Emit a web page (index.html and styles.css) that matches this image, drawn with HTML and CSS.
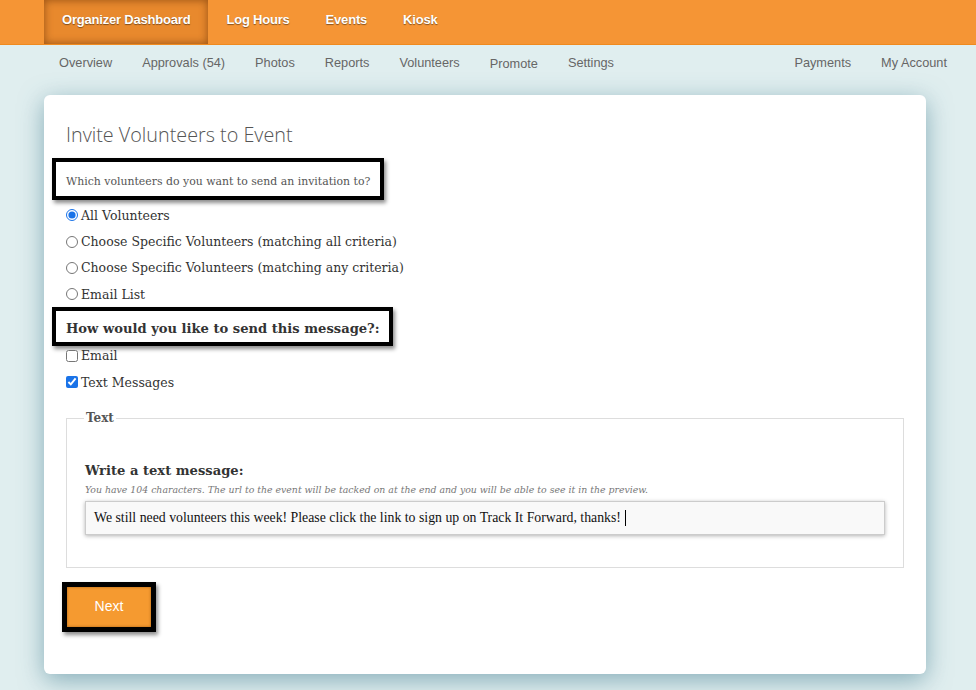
FILE: index.html
```html
<!DOCTYPE html>
<html>
<head>
<meta charset="utf-8">
<link rel="stylesheet" href="styles.css">
</head>
<body>
<header class="topbar">
  <a class="tab active">Organizer Dashboard</a>
  <a class="tab">Log Hours</a>
  <a class="tab">Events</a>
  <a class="tab">Kiosk</a>
</header>
<nav class="subnav">
  <div class="subnav-left">
    <a>Overview</a>
    <a>Approvals (54)</a>
    <a>Photos</a>
    <a>Reports</a>
    <a>Volunteers</a>
    <a class="low">Promote</a>
    <a>Settings</a>
  </div>
  <div class="subnav-right">
    <a>Payments</a>
    <a>My Account</a>
  </div>
</nav>
<main class="card">
  <h1 class="title">Invite Volunteers to Event</h1>
  <div class="callout q1">Which volunteers do you want to send an invitation to?</div>
  <div class="options first">
    <label class="opt"><input type="radio" name="who" checked> All Volunteers</label>
    <label class="opt"><input type="radio" name="who"> Choose Specific Volunteers (matching all criteria)</label>
    <label class="opt"><input type="radio" name="who"> Choose Specific Volunteers (matching any criteria)</label>
    <label class="opt"><input type="radio" name="who"> Email List</label>
  </div>
  <div class="callout q2">How would you like to send this message?:</div>
  <div class="options second">
    <label class="opt"><input type="checkbox"> Email</label>
    <label class="opt"><input type="checkbox" checked> Text Messages</label>
  </div>
  <fieldset class="textset">
    <legend>Text</legend>
    <div class="write">Write a text message:</div>
    <div class="hint">You have 104 characters. The url to the event will be tacked on at the end and you will be able to see it in the preview.</div>
    <div class="msg">We still need volunteers this week! Please click the link to sign up on Track It Forward, thanks!<span class="caret"></span></div>
  </fieldset>
  <div class="btnwrap"><button class="next">Next</button></div>
</main>
</body>
</html>
```
FILE: styles.css
```css
* { box-sizing: border-box; }
html, body { margin: 0; padding: 0; }
body {
  background: #e0eeef;
  font-family: "Liberation Sans", Arial, sans-serif;
  height: 690px;
  overflow: hidden;
}
.topbar {
  height: 45px;
  background: #f59535;
  border-bottom: 1px solid #f08a1e;
  display: flex;
  padding-left: 44px;
}
.tab {
  display: flex;
  align-items: center;
  padding: 0 18px 5px 18px;
  color: #fff;
  font-weight: bold;
  font-size: 13px;
  letter-spacing: -0.2px;
  text-shadow: 0 1px 1px rgba(0,0,0,0.45);
  height: 44px;
}
.tab.active {
  background: #e8892d;
  box-shadow: inset 0 0 8px rgba(90,40,0,0.6);
}
.subnav {
  display: flex;
  justify-content: space-between;
  padding: 0 14px 2px 44px;
  height: 37px;
  align-items: center;
}
.subnav a {
  color: #666;
  font-size: 12.75px;
  padding: 0 15px;
}
.subnav a.low { position: relative; top: 1px; }
.subnav-left, .subnav-right { display: flex; }
.card {
  margin: 13px 50px 0 44px;
  background: #fff;
  border-radius: 6px;
  height: 579px;
  padding: 28px 22px 0 22px;
  box-shadow: 0 6px 24px rgba(60,120,140,0.55);
}
.title {
  margin: 0;
  font-family: "Open Sans", sans-serif;
  font-weight: 300;
  font-size: 19.8px;
  color: #555;
  line-height: 24px;
}
.callout {
  font-family: "DejaVu Serif", Georgia, serif;
  display: block;
  white-space: nowrap;
  border: 4px solid #000;
  box-shadow: 2px 3px 4px rgba(0,0,0,0.45);
  margin-left: -14px;
}
.q1 {
  margin-top: 11px;
  font-size: 10.9px;
  color: #555;
  height: 42px;
  padding: 13px 9px 0 10px;
  width: 332px;
}
.q2 {
  margin-top: -1px;
  font-size: 13.1px;
  font-weight: bold;
  color: #333;
  height: 39px;
  padding: 10px 10px 0 10px;
  width: 341px;
}
.options { display: flex; flex-direction: column; }
.options.first { margin-top: 2px; }
.options.second { margin-top: -3px; }
.opt {
  font-family: "DejaVu Serif", Georgia, serif;
  font-size: 12.5px;
  color: #333;
  display: flex;
  align-items: center;
  height: 26.4px;
}
.opt input {
  margin: 0 3px 0 0;
  width: 12px;
  height: 12px;
  accent-color: #1a73e8;
}
.textset {
  margin: 16px 0 0 0;
  border: 1px solid #ddd;
  padding: 38px 18px 32px 18px;
}
.textset legend {
  font-family: "DejaVu Serif", Georgia, serif;
  font-weight: bold;
  font-size: 12px;
  color: #555;
  padding: 0 2px;
  margin-left: -1px;
}
.write {
  font-family: "DejaVu Serif", Georgia, serif;
  font-weight: bold;
  font-size: 13.1px;
  color: #333;
}
.hint {
  font-family: "DejaVu Serif", Georgia, serif;
  font-style: italic;
  font-size: 9.35px;
  color: #777;
  margin-top: 6px;
}
.msg {
  margin-top: 6px;
  height: 34px;
  border: 1px solid #ccc;
  background: #f9f9f9;
  box-shadow: 0 1px 4px rgba(0,0,0,0.3);
  font-family: "Liberation Serif", Georgia, serif;
  font-size: 13.8px;
  color: #111;
  display: flex;
  align-items: center;
  padding-left: 8px;
}
.caret {
  display: inline-block;
  width: 1px;
  height: 16px;
  background: #000;
  margin-left: 4px;
}
.btnwrap { margin-top: 14px; margin-left: -4px; }
.next {
  width: 94px;
  height: 50px;
  border: 5px solid #000;
  background: #f59a30;
  color: #fff;
  font-family: "Liberation Sans", Arial, sans-serif;
  font-size: 14px;
  line-height: 1;
  padding: 0 0 2px 0;
  box-shadow: 2px 3px 4px rgba(0,0,0,0.45), inset 0 0 3px rgba(120,60,0,0.6);
}
```
